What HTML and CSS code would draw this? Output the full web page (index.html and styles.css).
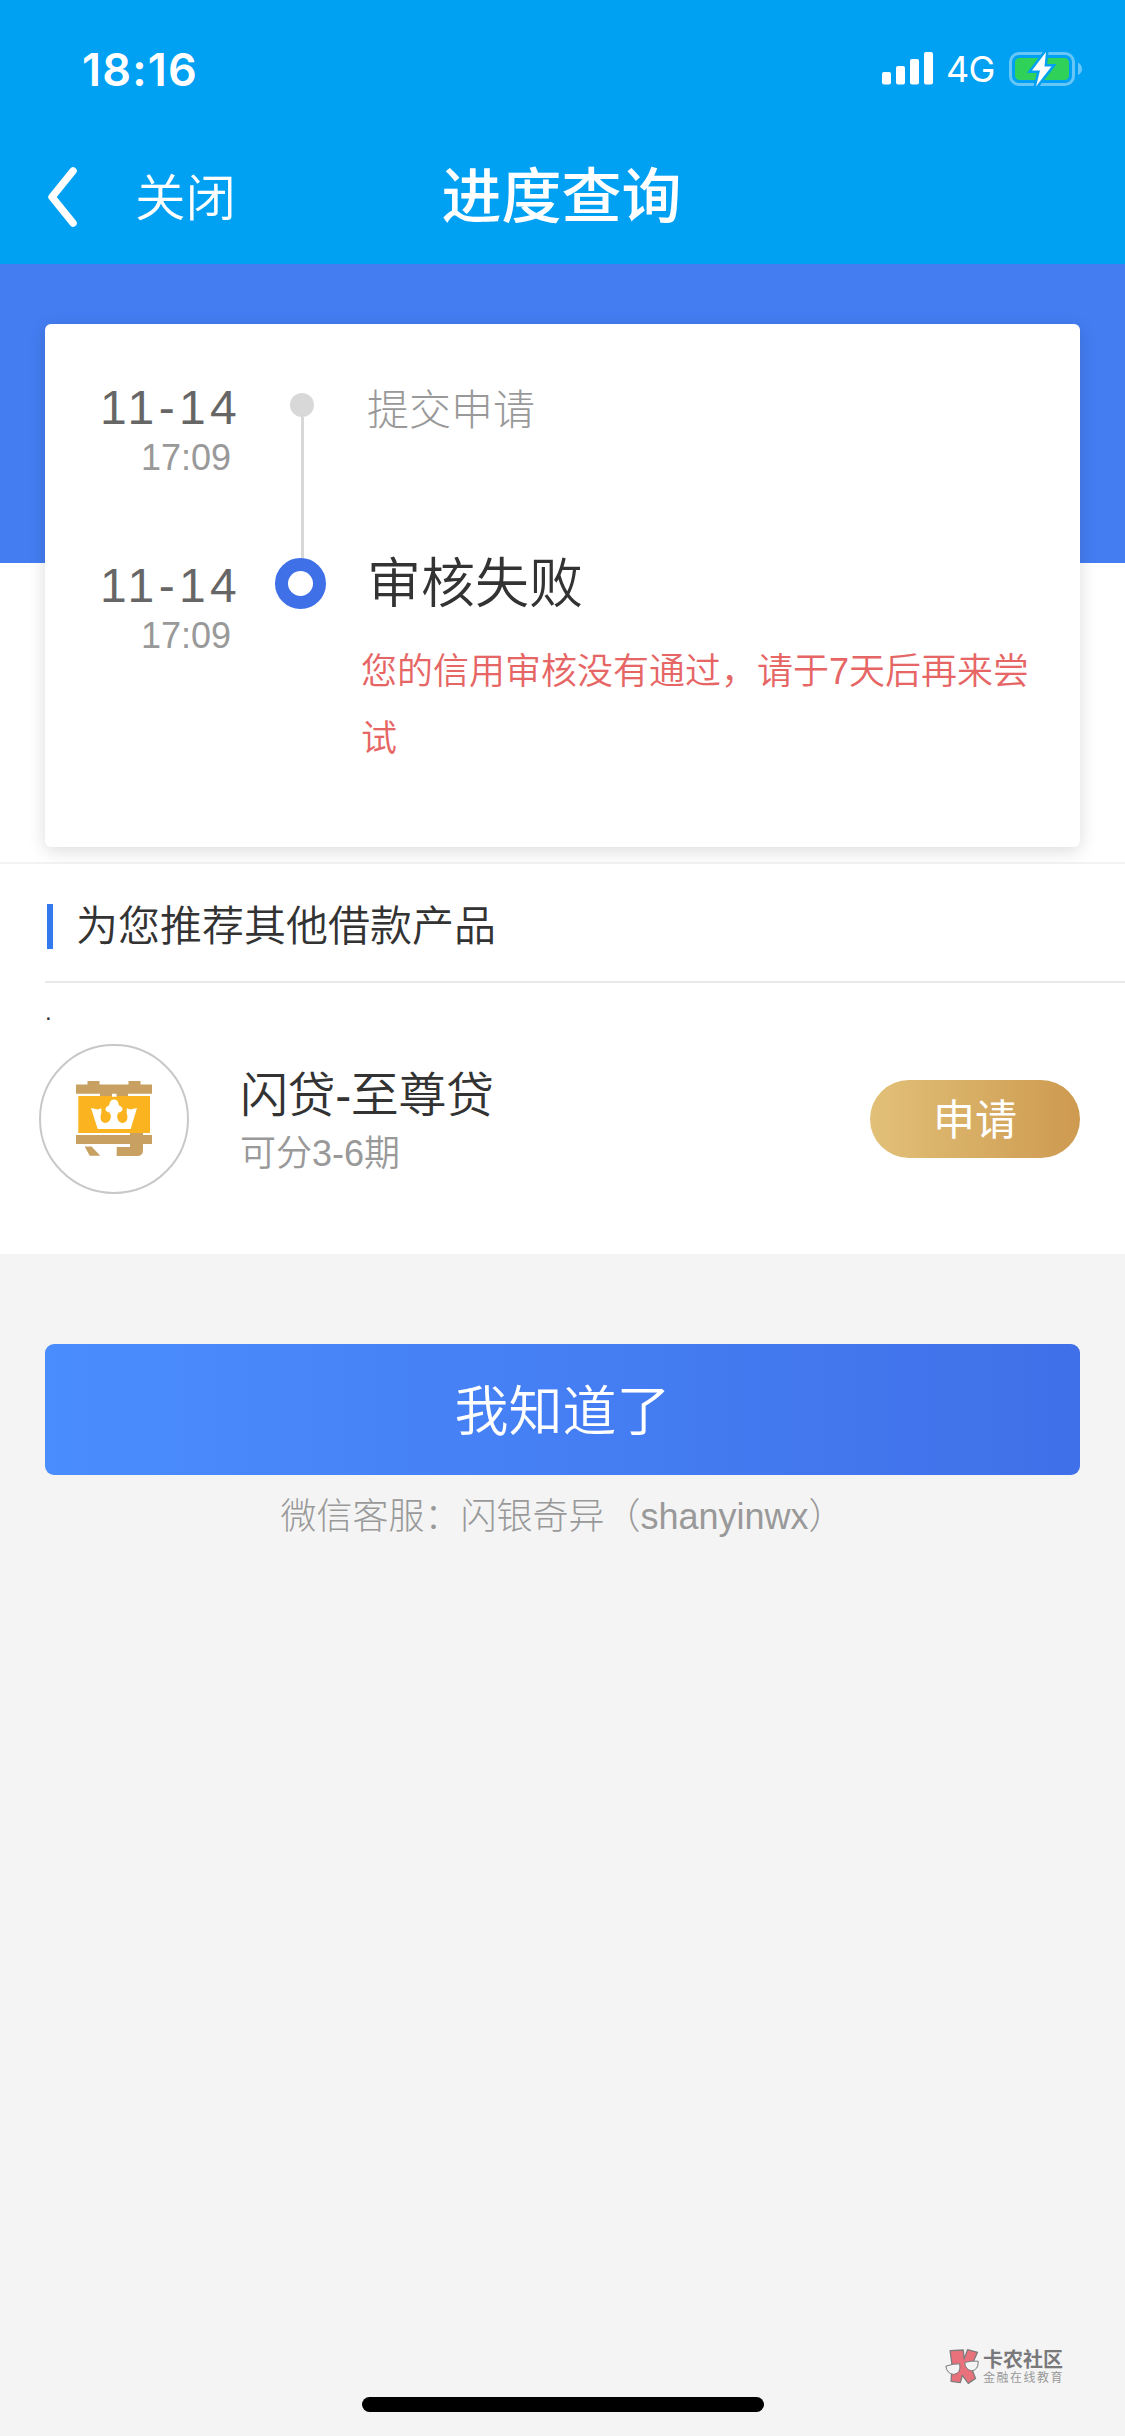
FILE: index.html
```html
<!DOCTYPE html>
<html lang="zh-CN">
<head>
<meta charset="utf-8">
<title>进度查询</title>
<link rel="stylesheet" href="styles.css">
</head>
<body>
<header class="header">
  <div class="status-bar">
    <span class="clock">18:16</span>
    <div class="status-icons">
      <svg class="signal" width="51" height="33" viewBox="0 0 51 33" fill="#fff">
        <rect x="0" y="20" width="9" height="12.5" rx="2"/>
        <rect x="14" y="14" width="9" height="18.5" rx="2"/>
        <rect x="28" y="7" width="9" height="25.5" rx="2"/>
        <rect x="42" y="0" width="9" height="32.5" rx="2"/>
      </svg>
      <span class="network">4G</span>
      <svg class="battery" width="73" height="36" viewBox="0 0 73 36">
        <rect x="1.5" y="2.5" width="63" height="31" rx="8.5" fill="none" stroke="#66c6f7" stroke-width="3"/>
        <path d="M69 11.5q4 2 4 6.500q0 4-4 6z" fill="#66c6f7"/>
        <rect x="6" y="7" width="54" height="22" rx="4.500" fill="#30d158"/>
        <path d="M37 1 23 19.500H31L27 35.500 42.500 15.500H35.500z" fill="#fff" stroke="#00a0f3" stroke-width="5" paint-order="stroke"/>
      </svg>
    </div>
  </div>
  <nav class="nav-bar">
    <div class="nav-left">
      <svg class="back" width="31" height="60" viewBox="0 0 31 60"><path d="M26 4 5 30 26 56" fill="none" stroke="#fff" stroke-width="7.500" stroke-linecap="round" stroke-linejoin="round"/></svg>
      <span class="close">关闭</span>
    </div>
    <h1 class="title">进度查询</h1>
  </nav>
</header>

<main>
  <section class="progress">
    <div class="card">
      <div class="step step-first">
        <div class="when"><span class="date">11-14</span><span class="time">17:09</span></div>
        <div class="rail"><i class="dot"></i><i class="line"></i></div>
        <div class="what"><span class="step-name">提交申请</span></div>
      </div>
      <div class="step">
        <div class="when"><span class="date">11-14</span><span class="time">17:09</span></div>
        <div class="rail"><i class="ring"></i></div>
        <div class="what"><span class="step-name current">审核失败</span><p class="reason">您的信用审核没有通过，请于7天后再来尝试</p></div>
      </div>
    </div>
  </section>

  <section class="recommend">
    <h2 class="section-title">为您推荐其他借款产品</h2>
    <div class="spacer">.</div>
    <div class="product">
      <svg class="product-icon" width="150" height="150" viewBox="0 0 150 150">
        <circle cx="75" cy="75" r="74" fill="#fff" stroke="#c8c8c8" stroke-width="2"/>
        <path fill="#c8a062" d="M37 40.500H48.500V37H60.500V40.500H89.500V37H101.500V40.500H113V49.700H89V53H61V49.700H37zM37 91H91V88H104V91H113V100H104V106Q104 112 98 112H77.700V103H91V100H37zM45.700 102.500H52.500L61.300 111.700H50.700z"/>
        <path fill="#fbb420" d="M39.300 52H111V89H39.300z"/>
        <path fill="#fff" d="M73 49.700h4.500v3H73zM52 64 58.700 65.500 62.300 64.300V69C60.500 75 62 78.500 66.500 79C72 78 73 72 70.500 68.500C66 68 65.500 64 68 62.500Q70 62 70.500 60Q71 55.500 75 55.500Q79 55.500 79.500 60Q80 62 82 62.500C84.500 64 84 68 79.500 68.500C77 72 78 78 83.500 79C88 78.500 89.500 75 87.700 69V64.300L91.300 65.500 98 64 91.700 85H58.700z"/>
      </svg>
      <div class="product-info">
        <span class="product-name">闪贷-至尊贷</span>
        <span class="product-term">可分3-6期</span>
      </div>
      <button class="apply">申请</button>
    </div>
  </section>

  <section class="actions">
    <button class="confirm">我知道了</button>
    <p class="service">微信客服：闪银奇异（shanyinwx）</p>
  </section>
</main>

<footer class="footer">
  <div class="brand">
    <svg class="brand-mark" width="35" height="38" viewBox="75 80 105 115">
      <path fill="#e8717b" stroke="#807c7d" stroke-width="4" stroke-linejoin="round" d="M90 91 130 89 132 116 143 88 173 96 153 140 167 175 145 190 127 166 121 188 93 184 96 136z"/>
      <path fill="#f4f4f4" stroke="#77787a" stroke-width="3" d="M77 138Q100 130 119 131Q124 160 101 163Q80 161 77 138zM134 127Q152 121 175 123Q176 150 155 152Q136 149 134 127z"/>
    </svg>
    <div class="brand-text"><span class="brand-name">卡农社区</span><span class="brand-sub">金融在线教育</span></div>
  </div>
  <div class="home-indicator"></div>
</footer>
</body>
</html>
```
FILE: styles.css
```css
* { box-sizing: border-box; margin: 0; padding: 0; }

body {
  width: 1125px;
  height: 2436px;
  display: flex;
  flex-direction: column;
  background: #f4f4f4;
  color: #333;
  font-family: "Liberation Sans", "Noto Sans CJK SC", sans-serif;
  overflow: hidden;
}

svg { display: block; flex: none; }
button { border: 0; color: #fff; font-family: inherit; }

.header { height: 264px; background: #00a0f3; color: #fff; }

.status-bar {
  height: 137px;
  padding: 0 43px 0 82px;
  display: flex;
  align-items: center;
  justify-content: space-between;
  font-family: Inter, sans-serif;
}
.clock { font-size: 45px; font-weight: 600; letter-spacing: 1.2px; padding-top: 1px; }
.status-icons { display: flex; align-items: center; }
.signal { margin-right: 13px; }
.network { font-size: 36px; width: 63px; line-height: 36px; padding-top: 1px; letter-spacing: -0.8px; }

.nav-bar {
  height: 118px;
  display: grid;
  grid-template-columns: 1fr auto 1fr;
  align-items: center;
}
.nav-left { display: flex; align-items: center; gap: 57px; padding: 2px 0 0 47px; }
.close { font-size: 50.5px; line-height: 60px; font-weight: 350; padding-top: 4px; }
.title { font-size: 60px; line-height: 80px; font-weight: 500; padding-top: 3px; margin-left: -2px; }

.progress {
  height: 600px;
  padding: 60px 45px 0;
  background: linear-gradient(#447df2 299px, #fff 299px);
  border-bottom: 2px solid #f3f3f3;
}
.card {
  height: 523px;
  background: #fff;
  border-radius: 6px;
  padding-top: 57px;
  box-shadow: 0 4px 18px rgba(0, 0, 0, 0.14);
}
.step { display: flex; }
.step-first { height: 178px; }
.when { width: 230px; padding-left: 55px; display: flex; flex-direction: column; flex: none; }
.date { font-size: 48px; line-height: 54px; letter-spacing: 4.4px; color: #666; }
.time { font-size: 36px; line-height: 46px; padding-left: 41px; color: #999; }
.rail { width: 51px; flex: none; display: flex; flex-direction: column; align-items: center; }
.step-first .rail { padding-left: 3px; }
.dot { width: 24px; height: 24px; margin-top: 12px; border-radius: 50%; background: #d8d8d8; flex: none; }
.line { width: 3px; height: 142px; background: #d8d8d8; }
.ring { width: 51px; height: 51px; margin-top: -1px; border-radius: 50%; border: 13.5px solid #4070e8; }
.what { padding-left: 41px; }
.step-name { display: block; font-size: 42px; line-height: 60px; font-weight: 300; color: #999; }
.current { font-size: 54px; line-height: 50px; font-weight: 350; color: #333; }
.reason { width: 680px; margin: 29px 0 0 -6px; font-size: 36px; line-height: 67px; color: #e66565; font-weight: 350; }

.recommend { height: 390px; background: #fff; }
.section-title {
  height: 119px;
  margin-left: 45px;
  padding-left: 2px;
  display: flex;
  align-items: center;
  gap: 23px;
  border-bottom: 2px solid #e9e9e9;
  font-size: 42px;
  font-weight: 350;
}
.section-title::before { content: ""; width: 6px; height: 45px; margin-top: 7px; background: #3478ee; }
.spacer { height: 61px; padding: 16px 0 0 45px; font-size: 24px; line-height: 26px; }
.product { display: flex; align-items: center; padding: 0 45px 0 39px; }
.product-info { margin-left: 51px; padding-top: 5px; flex: 1; display: flex; flex-direction: column; font-weight: 350; }
.product-name { font-size: 48px; line-height: 64px; letter-spacing: -0.4px; }
.product-term { font-size: 36px; line-height: 52px; color: #999; }
.apply {
  width: 210px;
  height: 78px;
  padding-bottom: 6px;
  border-radius: 39px;
  background: linear-gradient(90deg, #e2c078, #cd9a50);
  font-size: 42px;
}

.actions { padding: 90px 45px 0; }
.confirm {
  display: block;
  width: 100%;
  height: 131px;
  padding-bottom: 4px;
  border-radius: 9px;
  background: linear-gradient(90deg, #4a8dff, #4070e9);
  font-size: 54px;
  font-weight: 350;
}
.service { margin-top: 16px; font-size: 36px; line-height: 52px; font-weight: 300; color: #999; text-align: center; }

.footer { margin-top: auto; height: 90px; display: flex; flex-direction: column; align-items: center; }
.brand { align-self: flex-end; display: flex; gap: 3px; height: 51px; margin-right: 61px; padding-top: 1px; }
.brand-text { display: flex; flex-direction: column; white-space: nowrap; padding-top: 2px; }
.brand-name { font-size: 20px; line-height: 23px; font-weight: 700; color: #79797b; }
.brand-sub { font-size: 12px; line-height: 13px; letter-spacing: 1.5px; color: #999; }
.home-indicator { width: 402px; height: 15px; border-radius: 8px; background: #000; }
```
